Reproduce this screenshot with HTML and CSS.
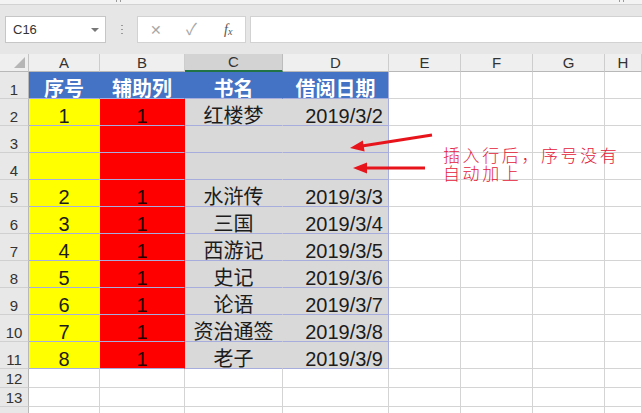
FILE: index.html
```html
<!DOCTYPE html>
<html lang="zh">
<head>
<meta charset="utf-8">
<title>Sheet</title>
<link rel="stylesheet" href="styles.css">
</head>
<body>
<div class="topstrip"><span class="grip g1"></span><span class="grip g2"></span></div>
<div class="fbar">
  <div class="namebox"><span class="nb-text">C16</span><span class="nb-arrow"></span></div>
  <div class="vdots"><i></i><i></i><i></i></div>
  <div class="fxbox"><span class="ico x">✕</span><span class="ico v">✓</span><span class="ico fx">f<sub>x</sub></span></div>
  <div class="finput"></div>
</div>
<div class="sheet">
  <div class="corner"><span class="tri"></span></div>
  <div class="ch">A</div><div class="ch">B</div><div class="ch sel">C</div><div class="ch">D</div><div class="ch">E</div><div class="ch">F</div><div class="ch">G</div><div class="ch">H</div>

  <div class="rh">1</div>
  <div class="c t hb">序号</div><div class="c t hb">辅助列</div><div class="c t hb">书名</div><div class="c t hb d">借阅日期</div>
  <div class="c"></div><div class="c"></div><div class="c"></div><div class="c"></div>

  <div class="rh">2</div>
  <div class="c t y">1</div><div class="c t r">1</div><div class="c t g">红楼梦</div><div class="c t g d">2019/3/2</div>
  <div class="c"></div><div class="c"></div><div class="c"></div><div class="c"></div>

  <div class="rh">3</div>
  <div class="c t y"></div><div class="c t r"></div><div class="c t g"></div><div class="c t g d"></div>
  <div class="c"></div><div class="c"></div><div class="c"></div><div class="c"></div>

  <div class="rh">4</div>
  <div class="c t y"></div><div class="c t r"></div><div class="c t g"></div><div class="c t g d"></div>
  <div class="c"></div><div class="c"></div><div class="c"></div><div class="c"></div>

  <div class="rh">5</div>
  <div class="c t y">2</div><div class="c t r">1</div><div class="c t g">水浒传</div><div class="c t g d">2019/3/3</div>
  <div class="c"></div><div class="c"></div><div class="c"></div><div class="c"></div>

  <div class="rh">6</div>
  <div class="c t y">3</div><div class="c t r">1</div><div class="c t g">三国</div><div class="c t g d">2019/3/4</div>
  <div class="c"></div><div class="c"></div><div class="c"></div><div class="c"></div>

  <div class="rh">7</div>
  <div class="c t y">4</div><div class="c t r">1</div><div class="c t g">西游记</div><div class="c t g d">2019/3/5</div>
  <div class="c"></div><div class="c"></div><div class="c"></div><div class="c"></div>

  <div class="rh">8</div>
  <div class="c t y">5</div><div class="c t r">1</div><div class="c t g">史记</div><div class="c t g d">2019/3/6</div>
  <div class="c"></div><div class="c"></div><div class="c"></div><div class="c"></div>

  <div class="rh">9</div>
  <div class="c t y">6</div><div class="c t r">1</div><div class="c t g">论语</div><div class="c t g d">2019/3/7</div>
  <div class="c"></div><div class="c"></div><div class="c"></div><div class="c"></div>

  <div class="rh">10</div>
  <div class="c t y">7</div><div class="c t r">1</div><div class="c t g">资治通签</div><div class="c t g d">2019/3/8</div>
  <div class="c"></div><div class="c"></div><div class="c"></div><div class="c"></div>

  <div class="rh">11</div>
  <div class="c t y">8</div><div class="c t r">1</div><div class="c t g">老子</div><div class="c t g d">2019/3/9</div>
  <div class="c"></div><div class="c"></div><div class="c"></div><div class="c"></div>

  <div class="rh sm">12</div>
  <div class="c"></div><div class="c"></div><div class="c"></div><div class="c"></div><div class="c"></div><div class="c"></div><div class="c"></div><div class="c"></div>

  <div class="rh sm">13</div>
  <div class="c"></div><div class="c"></div><div class="c"></div><div class="c"></div><div class="c"></div><div class="c"></div><div class="c"></div><div class="c"></div>

  <div class="rh sm"></div>
  <div class="c"></div><div class="c"></div><div class="c"></div><div class="c"></div><div class="c"></div><div class="c"></div><div class="c"></div><div class="c"></div>
</div>

<svg class="arrows" width="642" height="413" viewBox="0 0 642 413">
  <line x1="432" y1="135" x2="362" y2="146" stroke="#e8141c" stroke-width="3"/>
  <polygon points="350,148 364.6,151.5 362.8,140.5" fill="#e8141c"/>
  <line x1="425" y1="168" x2="365" y2="168" stroke="#e8141c" stroke-width="3"/>
  <polygon points="353,168 367,162.5 367,173.5" fill="#e8141c"/>
</svg>
<div class="note">插入行后，序号没有<br>自动加上</div>
</body>
</html>
```

FILE: styles.css
```css
html, body {
  margin: 0;
  padding: 0;
}
body {
  width: 642px;
  height: 413px;
  overflow: hidden;
  position: relative;
  background: #ffffff;
  font-family: "Liberation Sans", "Noto Sans CJK SC", sans-serif;
}

.topstrip {
  height: 5px;
  background: #f3f3f3;
  border-bottom: 1px solid #d2d2d2;
  box-sizing: border-box;
  position: relative;
}
.grip {
  position: absolute;
  top: 0;
  width: 3px;
  height: 2px;
  border-left: 1px solid #9a9a9a;
  border-right: 1px solid #9a9a9a;
}
.g1 { left: 116px; }
.g2 { left: 619px; }

.fbar {
  height: 49px;
  background: #e6e6e6;
  box-sizing: border-box;
  padding-top: 11px;
  display: flex;
  align-items: flex-start;
}
.namebox {
  margin-left: 5px;
  width: 101px;
  height: 27px;
  background: #ffffff;
  border: 1px solid #c6c6c6;
  box-sizing: border-box;
  display: flex;
  align-items: center;
  justify-content: space-between;
  padding: 0 6px 0 7px;
}
.nb-text {
  font-size: 13px;
  color: #333333;
}
.nb-arrow {
  width: 0;
  height: 0;
  border-left: 4px solid transparent;
  border-right: 4px solid transparent;
  border-top: 4px solid #777777;
}
.vdots {
  width: 31px;
  height: 27px;
  display: flex;
  flex-direction: column;
  align-items: center;
  justify-content: center;
  gap: 3px;
}
.vdots i {
  display: block;
  width: 2px;
  height: 1px;
  background: #9a9a9a;
}
.fxbox {
  width: 109px;
  height: 27px;
  background: #ffffff;
  border: 1px solid #d2d2d2;
  box-sizing: border-box;
  display: flex;
  align-items: center;
  position: relative;
}
.ico {
  position: absolute;
  top: 4px;
  line-height: 18px;
}
.ico.x {
  left: 12px;
  font-size: 14px;
  color: #a8a8a8;
}
.ico.v {
  left: 48px;
  font-size: 16px;
  color: #a8a8a8;
}
.ico.fx {
  left: 86px;
  font-family: "Liberation Serif", serif;
  font-style: italic;
  font-size: 14px;
  color: #555555;
}
.ico.fx sub {
  font-size: 10px;
  vertical-align: -1px;
}
.finput {
  margin-left: 4px;
  flex: 1;
  height: 27px;
  background: #ffffff;
  border: 1px solid #d2d2d2;
  border-right: none;
  box-sizing: border-box;
}

.sheet {
  display: grid;
  grid-template-columns: 29px 71px 85px 98px 106px 72px 72px 72px 37px;
  grid-template-rows: 18px repeat(11, 27px) 19px 19px 19px;
}
.corner {
  background: #efefef;
  border-right: 1px solid #c4c4c4;
  border-bottom: 1px solid #b8b8b8;
  box-sizing: border-box;
  position: relative;
}
.tri {
  position: absolute;
  right: 3px;
  bottom: 3px;
  width: 0;
  height: 0;
  border-left: 11px solid transparent;
  border-bottom: 11px solid #b6b6b6;
}
.ch {
  background: #efefef;
  border-right: 1px solid #cdcdcd;
  border-bottom: 1px solid #b8b8b8;
  box-sizing: border-box;
  display: flex;
  align-items: flex-end;
  justify-content: center;
  font-size: 15px;
  line-height: 16px;
  color: #333333;
}
.ch.sel {
  background: #d3d3d3;
  border-bottom: 2px solid #217346;
  border-right-color: #bcbcbc;
}
.rh {
  background: #e8e8e8;
  border-right: 1px solid #b8b8b8;
  border-bottom: 1px solid #d0d0d0;
  box-sizing: border-box;
  display: flex;
  align-items: flex-end;
  justify-content: center;
  font-size: 15px;
  line-height: 16px;
  color: #333333;
}
.rh.sm {
  line-height: 16px;
}
.c {
  border-right: 1px solid #d4d4d4;
  border-bottom: 1px solid #d4d4d4;
  box-sizing: border-box;
  display: flex;
  align-items: flex-end;
  justify-content: center;
  font-size: 20px;
  line-height: 18px;
  color: #1c1c1c;
  white-space: nowrap;
}
.c.t {
  border-right-color: transparent;
  border-bottom-color: #a7addc;
}
.c.t.d {
  border-right-color: #a7addc;
  justify-content: flex-end;
  padding-right: 5px;
}
.hb {
  background: #4472c4;
  color: #ffffff;
  font-weight: bold;
}
.c.t.hb.d {
  justify-content: center;
  padding-right: 0;
}
.y { background: #ffff00; }
.r { background: #ff0000; color: #2a0000; }
.g { background: #d9d9d9; }

.arrows {
  position: absolute;
  left: 0;
  top: 0;
  pointer-events: none;
}
.note {
  position: absolute;
  left: 443px;
  top: 146px;
  font-family: "Noto Sans CJK SC", sans-serif;
  font-weight: 300;
  font-size: 17px;
  line-height: 18px;
  color: #e3213a;
  letter-spacing: 2.6px;
  white-space: nowrap;
}
```
